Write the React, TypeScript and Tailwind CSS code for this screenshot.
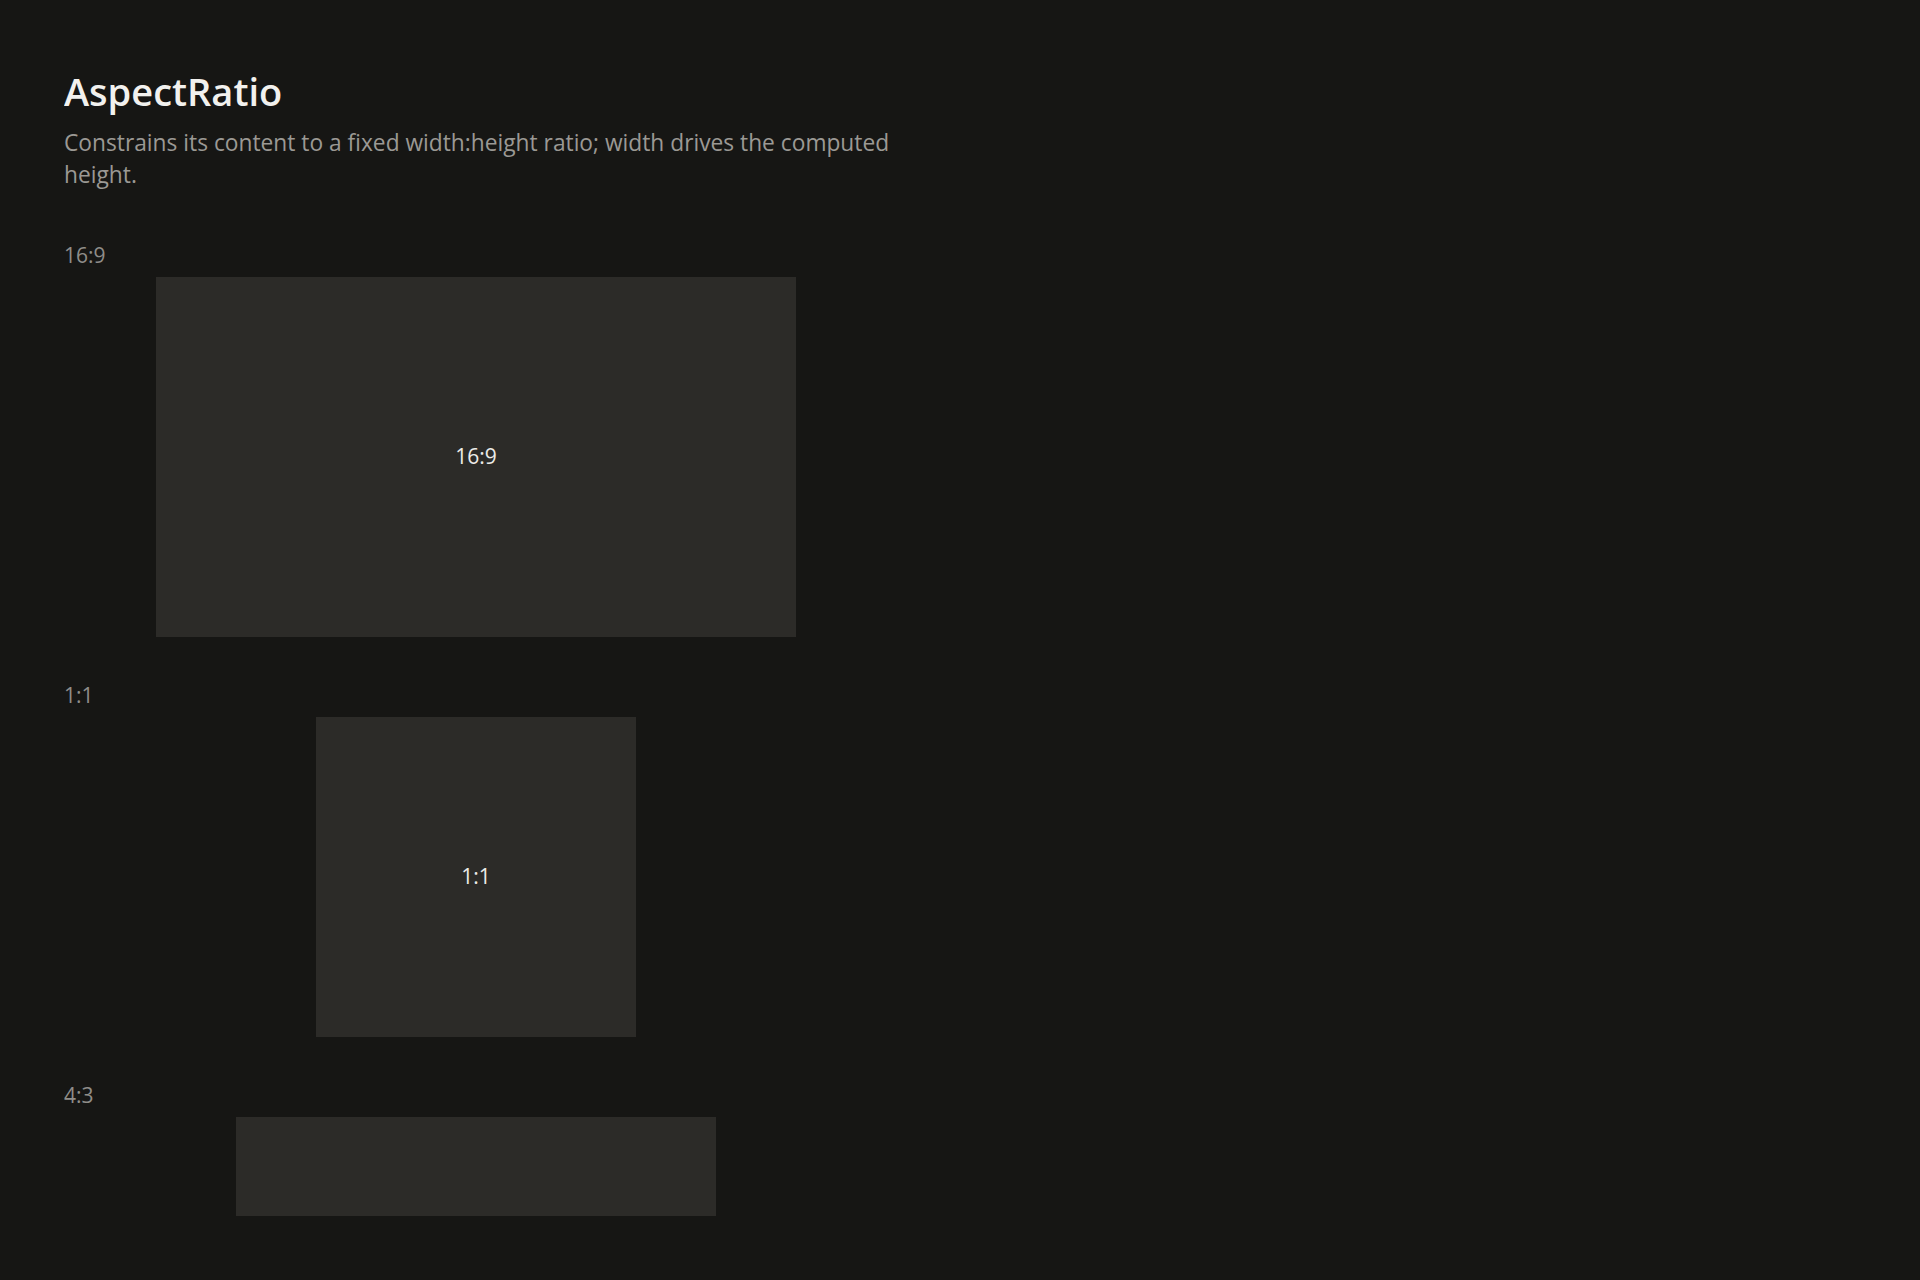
interface IRatio {
  label: string;
  width: string;
  aspect: string;
}

const ratios: IRatio[] = [
  { label: "16:9", width: "w-[640px]", aspect: "aspect-video" },
  { label: "1:1", width: "w-[320px]", aspect: "aspect-square" },
  { label: "4:3", width: "w-[480px]", aspect: "aspect-[4/3]" },
];

const App = () => {
  return (
    <div className="h-screen bg-[#161614] p-16 font-['Open_Sans',sans-serif]">
      <div className="h-full overflow-hidden">
        <div className="w-[824px] flex flex-col">
          <h1 className="text-[38px] leading-[44px] font-semibold text-[#f2f1ee] mt-[5px]">
            AspectRatio
          </h1>
          <p className="w-[850px] text-[22.75px] leading-[32px] text-[#9b9994] mt-[14px]">
            Constrains its content to a fixed width:height ratio; width drives
            the computed height.
          </p>
          <div className="flex flex-col gap-[44px] mt-[50px]">
            {ratios.map((ratio) => (
              <section key={ratio.label} className="flex flex-col gap-[8px]">
                <span className="text-[21px] leading-[28px] text-[#8f8d89]">
                  {ratio.label}
                </span>
                <div className="flex justify-center">
                  <div
                    className={`${ratio.width} ${ratio.aspect} bg-[#2c2b28] flex items-center justify-center text-[21px] text-[#ecebe8]`}
                  >
                    {ratio.label}
                  </div>
                </div>
              </section>
            ))}
          </div>
        </div>
      </div>
    </div>
  );
};

export default App;
